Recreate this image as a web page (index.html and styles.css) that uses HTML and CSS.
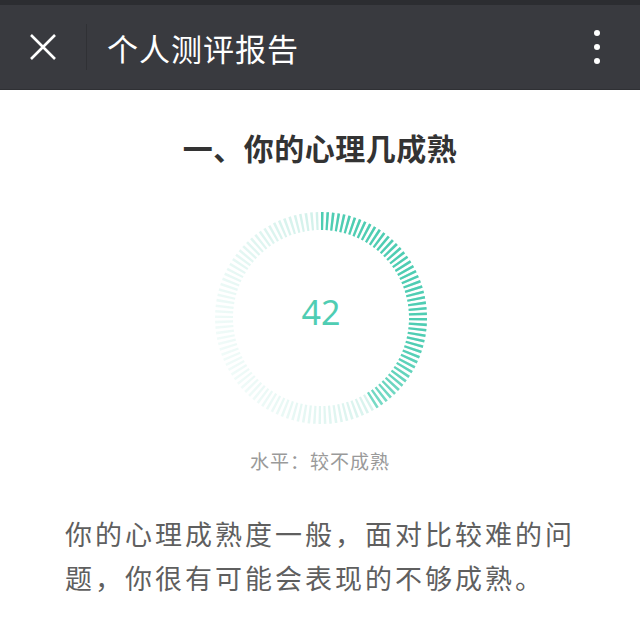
FILE: index.html
```html
<!DOCTYPE html>
<html lang="zh-CN">
<head>
    <meta charset="UTF-8">
    <meta name="viewport" content="width=device-width, initial-scale=1.0">
    <title>个人测评报告</title>
    <link rel="stylesheet" href="styles.css">
</head>
<body>
    <div class="status-strip"></div>
    <div class="nav-bar">
        <button class="close-btn" aria-label="关闭">
            <svg width="28" height="28" viewBox="0 0 28 28">
                <path d="M2 2 L26 26 M26 2 L2 26" stroke="#fff" stroke-width="2.6" fill="none"/>
            </svg>
        </button>
        <div class="nav-divider"></div>
        <div class="nav-title">个人测评报告</div>
        <button class="more-btn" aria-label="更多">
            <span class="dot"></span>
            <span class="dot"></span>
            <span class="dot"></span>
        </button>
    </div>

    <div class="report">
        <h1 class="section-title">一、你的心理几成熟</h1>

        <div class="gauge">
            <svg class="gauge-ring" width="212" height="212" viewBox="0 0 212 212">
                <defs>
                    <linearGradient id="restGrad" gradientUnits="userSpaceOnUse" x1="160" y1="205" x2="70" y2="5">
                        <stop offset="0" stop-color="#c2ece3"/>
                        <stop offset="0.55" stop-color="#dcf4ef"/>
                        <stop offset="1" stop-color="#f1fbf9"/>
                    </linearGradient>
                    <linearGradient id="doneGrad" gradientUnits="userSpaceOnUse" x1="150" y1="130" x2="150" y2="200">
                        <stop offset="0" stop-color="#4fcdb3"/>
                        <stop offset="1" stop-color="#7ddcc8"/>
                    </linearGradient>
                </defs>
                <circle cx="106" cy="106" r="97" fill="none" stroke="url(#restGrad)" stroke-width="18"
                        pathLength="120" stroke-dasharray="0.47 0.53" transform="rotate(-90 106 106)"/>
                <path d="M106 9 A97 97 0 0 1 154.5 190.004" fill="none" stroke="url(#doneGrad)" stroke-width="18"
                      pathLength="50" stroke-dasharray="0.47 0.53"/>
            </svg>
            <div class="gauge-score">42</div>
        </div>

        <div class="level">水平：较不成熟</div>

        <p class="summary">你的心理成熟度一般，面对比较难的问题，你很有可能会表现的不够成熟。</p>
    </div>
</body>
</html>
```

FILE: styles.css
```css
* {
    margin: 0;
    padding: 0;
    box-sizing: border-box;
}

body {
    font-family: "Noto Sans CJK SC", "Noto Sans", sans-serif;
    background: #fff;
    color: #333;
    width: 640px;
    overflow: hidden;
}

.status-strip {
    height: 5px;
    background: #2c2d31;
}

.nav-bar {
    height: 85px;
    background: #393a3f;
    border-bottom: 1px solid #2f3034;
    display: flex;
    align-items: center;
}

.close-btn {
    background: none;
    border: none;
    width: 86px;
    height: 100%;
    display: flex;
    align-items: center;
    justify-content: center;
}

.nav-divider {
    width: 1px;
    height: 46px;
    background: #303135;
}

.nav-title {
    flex: 1;
    padding-left: 20px;
    font-size: 31px;
    color: #fff;
    letter-spacing: 1px;
    line-height: 1;
}

.more-btn {
    background: none;
    border: none;
    width: 86px;
    height: 100%;
    display: flex;
    flex-direction: column;
    align-items: center;
    justify-content: center;
    gap: 8px;
}

.dot {
    width: 6px;
    height: 6px;
    border-radius: 50%;
    background: #fff;
}

.report {
    display: flex;
    flex-direction: column;
    align-items: center;
}

.section-title {
    margin-top: 36px;
    font-size: 30px;
    line-height: 42px;
    font-weight: 700;
    color: #333;
    letter-spacing: 0.5px;
}

.gauge {
    margin-top: 44px;
    margin-left: 2px;
    width: 212px;
    height: 212px;
    position: relative;
}

.gauge-ring {
    display: block;
}

.gauge-score {
    position: absolute;
    inset: 0;
    display: flex;
    align-items: center;
    justify-content: center;
    font-family: "Noto Sans", sans-serif;
    font-size: 34px;
    color: #4fcdb3;
    padding-bottom: 12px;
}

.level {
    margin-top: 24px;
    font-size: 19px;
    line-height: 26px;
    color: #9a9a9a;
    letter-spacing: 1px;
}

.summary {
    align-self: stretch;
    margin-top: 38px;
    padding: 0 58px 0 65px;
    font-size: 27px;
    line-height: 44px;
    letter-spacing: 3px;
    color: #5f5f5f;
}
```
